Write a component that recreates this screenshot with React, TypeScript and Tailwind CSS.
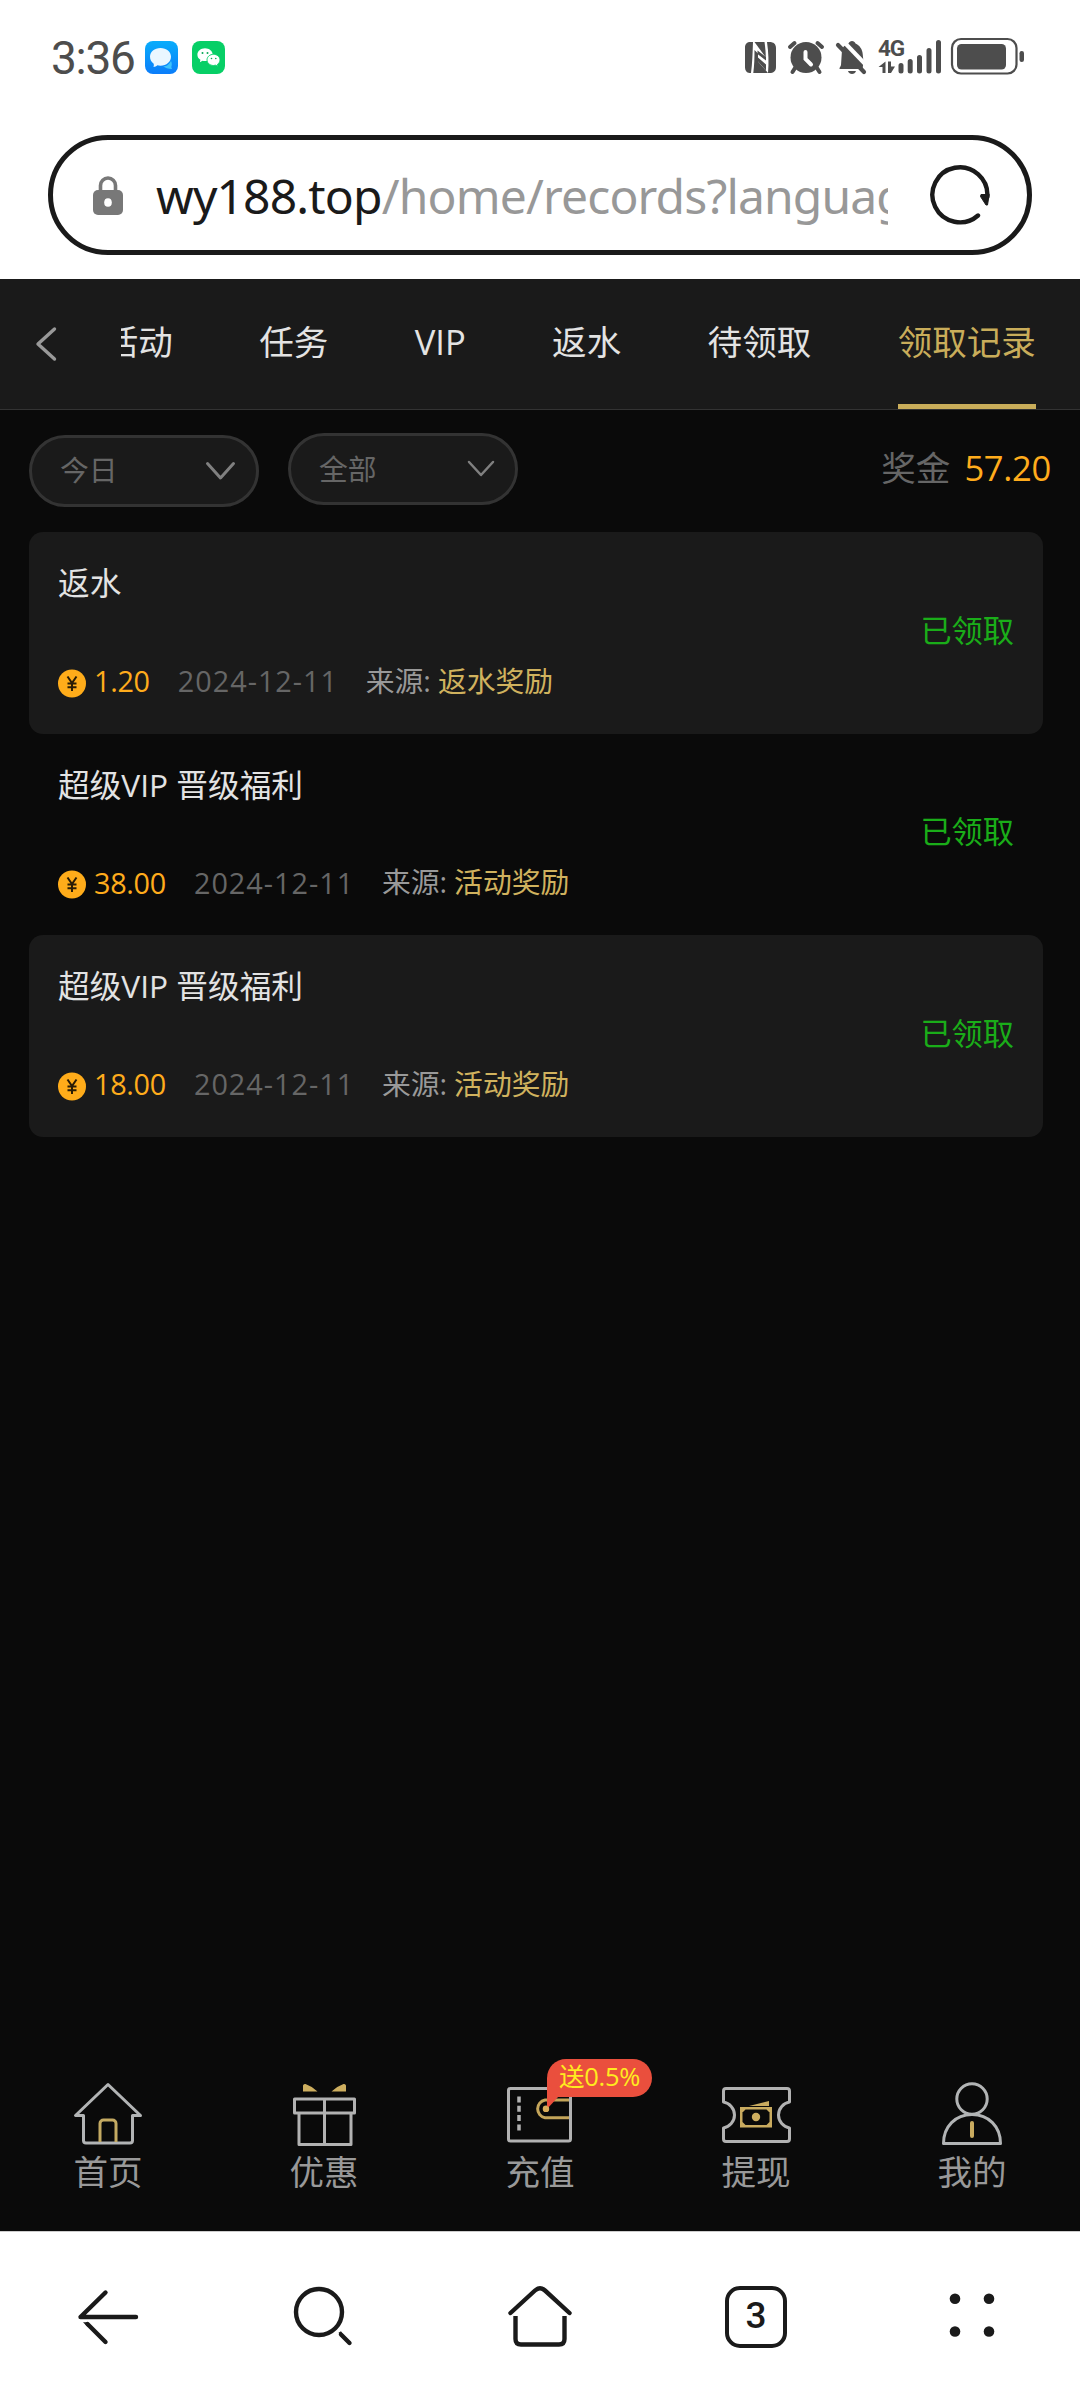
import React from "react";

const UI_FONT = "font-['Open_Sans','Noto_Sans_CJK_SC',sans-serif]";

function ChatAppIcon() {
  return (
    <svg viewBox="145 41 33 33" className="h-[33px] w-[33px]">
      <defs>
        <linearGradient id="chatBg" x1="0" y1="0" x2="0" y2="1">
          <stop offset="0" stopColor="#09adfb" />
          <stop offset="1" stopColor="#0b7dfa" />
        </linearGradient>
      </defs>
      <rect x="145" y="41" width="33" height="33" rx="8" fill="url(#chatBg)" />
      <path d="M163 66c4 1 6-2 8-5 1 2 1 4 .3 6l.7 2c-4 0-7-1-9-3z" fill="#3fc4fb" />
      <path d="M160.500 48c6 0 10.500 3.700 10.500 8.800s-4.500 8.900-10.500 8.900c-1.200 0-2.300 0-3.200-.4-1 1-2.300 1.500-3.800 1.600.4-1 .5-2.200.2-3.200-2.300-1.600-3.700-4-3.700-6.900 0-5.100 4.500-8.800 10.500-8.800z" fill="#eaf7ff" />
    </svg>
  );
}

function WeChatAppIcon() {
  return (
    <svg viewBox="192 41 33 33" className="h-[33px] w-[33px]">
      <rect x="192" y="41" width="33" height="33" rx="8" fill="#07cf66" />
      <path d="M205 48.300c4.300 0 7.700 2.900 7.700 6.400 0 3.600-3.400 6.400-7.700 6.400-.9 0-1.700-.1-2.500-.3l-2.600 1.500.5-2.500c-1.900-1.200-3-3-3-5.100 0-3.500 3.300-6.400 7.600-6.400z" fill="#fff" />
      <path d="M213.500 54.300c3.600 0 6.500 2.500 6.500 5.600 0 1.800-1 3.400-2.500 4.400l.4 2.100-2.200-1.200c-.7.200-1.400.3-2.200.3-3.600 0-6.500-2.500-6.500-5.600s2.900-5.600 6.500-5.600z" fill="#fff" stroke="#07cf66" strokeWidth=".9" />
      <g fill="#07a855">
        <circle cx="202.500" cy="53" r="1" />
        <circle cx="207.500" cy="53" r="1" />
        <circle cx="211.500" cy="58.500" r=".8" />
        <circle cx="215.800" cy="58.500" r=".8" />
      </g>
    </svg>
  );
}

function StatusIcons() {
  return (
    <div className="flex items-start text-[#4d4d4d]">
      <svg viewBox="744 37 34 38" className="h-[38px] w-[34px]" fill="currentColor">
        <path d="M752 42h-2.500c-3.500 0-5.500 2-5.500 5.500v20c0 3 1.500 5.300 4.500 5.500h1.500c1.300-9 1.600-20 2-31z" />
        <path d="M753.500 42h10c.8 5.500 1.200 10.500 1.300 15.500z" />
        <path d="M766 42h2.500c4 0 6.500 2 6.500 6v19c0 4-2.500 6-6.500 6h-1.500c1-10 .5-21-1-31z" />
        <path d="M752.300 73c1-7 1.200-15 1.200-23l3.500 3.500v8l10 11.500z" />
        <path d="M756.500 50.500l8.500 6.500v3.500l-8.500-6.500zM757 57.500l8 7v6l-8-9z" />
      </svg>
      <svg viewBox="785 37 40 38" className="ml-[7px] h-[38px] w-[40px]">
        <circle cx="805" cy="57.500" r="15.500" fill="currentColor" />
        <g stroke="currentColor" strokeWidth="4" strokeLinecap="round">
          <path d="M789 47l4.500-4M821 47l-4.500-4M794 68l-2.500 4M816 68l2.500 4" />
        </g>
        <path d="M804.500 52v7l5.500 5.500" fill="none" stroke="#fff" strokeWidth="4" strokeLinecap="round" />
      </svg>
      <svg viewBox="834 37 34 38" className="ml-[9px] h-[38px] w-[34px]">
        <path d="M838.500 69c0-2 1-1.800 1.500-4l1-15c1-4 4-5 6.500-6.500 1-3.500 6-3.500 7 0 4 1.500 7 6 7.200 10.500l.8 8-1 7z" fill="currentColor" />
        <path d="M847 71h8c-1 4-7 4-8 0z" fill="currentColor" />
        <path d="M842 41l24 25" stroke="#fff" strokeWidth="4" />
        <path d="M837 45l26 27" stroke="currentColor" strokeWidth="4.200" strokeLinecap="round" />
      </svg>
      <div className="ml-[9px] flex h-[38px] w-[62px]">
        <div className="flex w-[20px] flex-col">
          <span className="h-[20px] w-[26px] font-['Roboto',sans-serif] text-[22.500px] font-bold leading-[22px] tracking-[-1.200px]">4G</span>
          <svg viewBox="877 61 17 13" className="mt-[4px] h-[13px] w-[17px]" fill="currentColor">
            <path d="M884.500 61.500v11.500h-3v-6h-4zM887 61.500h3v5h4l-4 6.500h-3z" />
          </svg>
        </div>
        <svg viewBox="896 37 44 38" className="h-[38px] w-[44px] shrink-0" stroke="currentColor" strokeWidth="5" strokeLinecap="round">
          <path d="M899 65.500v5.500M908.200 61.500v9.500M917.500 57.500v13.500M927 50.500v20.500M936.500 42.500v28.500" />
        </svg>
      </div>
      <svg viewBox="950 37 76 38" className="ml-[10px] h-[38px] w-[76px]">
        <rect x="952" y="39" width="64.500" height="34.500" rx="9" fill="none" stroke="currentColor" strokeWidth="2.200" />
        <rect x="957" y="44" width="49" height="25.500" rx="4.500" fill="currentColor" />
        <rect x="1019.500" y="51" width="4.500" height="11" rx="2.200" fill="currentColor" />
      </svg>
    </div>
  );
}

function AddressBar() {
  return (
    <div className="mx-[48px] flex h-[120px] items-center rounded-full border-[5px] border-[#1a1a1a] bg-white">
      <svg viewBox="93 175 30 41" className="ml-[40px] h-[41px] w-[30px]">
        <path d="M100.500 192v-6.500a7.500 7.500 0 0 1 15 0v6.500" fill="none" stroke="#787878" strokeWidth="3.600" />
        <rect x="93" y="190" width="30" height="25" rx="5" fill="#787878" />
        <ellipse cx="108" cy="202.500" rx="3.800" ry="4.300" fill="#fff" />
      </svg>
      <div className="ml-[33px] h-[70px] w-[732px] overflow-hidden whitespace-nowrap font-['Noto_Sans',sans-serif] text-[48px] leading-[71px] text-[#989898]">
        <span className="tracking-[-0.850px] text-[#1a1a1a]">wy188.top</span>
        <span className="tracking-[-0.850px]">/home/records?language=</span>
      </div>
      <svg viewBox="929 165 62 62" className="ml-[41px] h-[62px] w-[62px]">
        <path d="M978 216.500A27.500 27.500 0 1 1 987.300 198" fill="none" stroke="#1a1a1a" strokeWidth="4.400" strokeLinecap="round" />
        <path d="M981 195.500h8.200l-1.700 10.500h-1.500l-5.500-8.500z" fill="#1a1a1a" stroke="#1a1a1a" strokeLinejoin="round" />
      </svg>
    </div>
  );
}

const tabs = ["活动", "任务", "VIP", "返水", "待领取"];

function TabHeader() {
  return (
    <div className="flex h-[131px] border-b border-[#333] bg-[#1a1a1a]">
      <svg viewBox="34 324 26 40" className="ml-[34px] mt-[45px] h-[40px] w-[26px]">
        <path d="M54.500 329l-16.500 15 16.500 15" fill="none" stroke="#999" strokeWidth="3.400" strokeLinecap="round" strokeLinejoin="round" />
      </svg>
      <div className="ml-[61px] flex flex-1 justify-end gap-[86.400px] overflow-hidden whitespace-nowrap pr-[44.200px] text-[34.560px] leading-[126px] text-[#e3e3e3]">
        {tabs.map((t) => (
          <span key={t}>{t}</span>
        ))}
        <span className="border-b-[5px] border-[#c9ad5a] text-[#c9ad5a]">领取记录</span>
      </div>
    </div>
  );
}

function Filters() {
  return (
    <div className="flex h-[122px] items-start pl-[29px] pr-[29px] pt-[23px]">
      <div className="mt-[2px] flex h-[72px] w-[230px] items-center justify-between rounded-full border-[3px] border-[#333] bg-[#1a1a1a] pl-[28px] pr-[18px] text-[28.800px] leading-[66px] text-[#666]">
        <span className="-mt-[2px]">今日</span>
        <svg viewBox="204 460 34 22" className="h-[22px] w-[34px]">
          <path d="M207.500 463.500l13 14.500 13-14.500" fill="none" stroke="#808080" strokeWidth="3" strokeLinecap="round" strokeLinejoin="round" />
        </svg>
      </div>
      <div className="ml-[29px] flex h-[72px] w-[230px] items-center justify-between rounded-full border-[3px] border-[#333] bg-[#1a1a1a] pl-[28px] pr-[19px] text-[28.800px] leading-[66px] text-[#666]">
        <span>全部</span>
        <svg viewBox="466 458 30 22" className="h-[22px] w-[30px]">
          <path d="M469 462l12 13 12-13" fill="none" stroke="#808080" strokeWidth="2.500" strokeLinecap="round" strokeLinejoin="round" />
        </svg>
      </div>
      <div className="ml-auto flex text-[34.560px] leading-[70px] text-[#666]">
        <span>奖金</span>
        <span className="ml-[14px] tracking-[-0.300px] text-[#ffac1c]">57.20</span>
      </div>
    </div>
  );
}

function Coin() {
  return (
    <svg viewBox="0 0 28 28" className="mt-[4px] h-[29px] w-[28px]">
      <circle cx="14" cy="14" r="14" fill="#ffac1a" />
      <path d="M9.500 7l4.500 6.500L18.500 7M14 13.500v8M9.500 14h9M9.500 17.800h9" fill="none" stroke="#2a1c05" strokeWidth="2" />
    </svg>
  );
}

const records = [
  { title: "返水", amount: "1.20", source: "返水奖励" },
  { title: "超级VIP 晋级福利", amount: "38.00", source: "活动奖励" },
  { title: "超级VIP 晋级福利", amount: "18.00", source: "活动奖励" },
];

function RecordList() {
  return (
    <div className="ml-[29px] flex w-[1014px] flex-col">
      {records.map((r, i) => (
        <div key={i} className="flex h-[201.600px] items-center justify-between rounded-[14px] pl-[29px] pr-[29px] odd:bg-[#1a1a1a]">
          <div className="flex h-full flex-col pt-[28px]">
            <span className="h-[46px] text-[31.680px] leading-[46px] text-[#e3e3e3]">{r.title}</span>
            <div className="mt-[53px] flex h-[44px] items-center text-[28.800px] leading-[44px]">
              <Coin />
              <span className="ml-[8px] tracking-[-0.300px] text-[#ffac1c]">{r.amount}</span>
              <span className="ml-[28px] w-[160px] whitespace-nowrap tracking-[1px] text-[#666]">2024-12-11</span>
              <span className="-mt-[1px] ml-[28px] text-[#999]">来源:</span>
              <span className="-mt-[1px] ml-[7px] text-[#d0b25e]">{r.source}</span>
            </div>
          </div>
          <span className="pb-[5px] text-[31.200px] text-[#1aad19]">已领取</span>
        </div>
      ))}
    </div>
  );
}

const ICON = "h-[68px] w-[76px]";

function NavItem({ label, children }: { label: string; children: React.ReactNode }) {
  return (
    <div className="relative flex w-[216px] flex-col items-center text-[34.560px] leading-[48px] text-[#999]">
      {children}
      <span>{label}</span>
    </div>
  );
}

function SiteNav() {
  return (
    <div className="mt-auto flex h-[151px]">
      <NavItem label="首页">
        <svg viewBox="70 2080 76 68" className={ICON} fill="none" strokeWidth="3" strokeLinejoin="round">
          <path d="M108 2084.500L75.500 2115.500h8v25a2.500 2.500 0 0 0 2.500 2.500h44a2.500 2.500 0 0 0 2.500-2.500v-25h8z" stroke="#b2b4b5" />
          <path d="M100 2142v-18.500a3.500 3.500 0 0 1 3.500-3.500h9a3.500 3.500 0 0 1 3.500 3.500V2142" stroke="#c4aa62" />
        </svg>
      </NavItem>
      <NavItem label="优惠">
        <svg viewBox="286 2080 76 68" className={ICON} fill="none" strokeWidth="3" strokeLinejoin="round">
          <path d="M294.500 2099h60v14h-60zM299 2113.500v31h52v-31M324.500 2099v45" stroke="#b2b2b2" />
          <path d="M303 2091.500v-6q.500-2 2.500-1.500 6 2 12 7.500zM346 2091.500v-6q-.500-2-2.500-1.500-6 2-12 7.500z" fill="#cdae5f" />
        </svg>
      </NavItem>
      <NavItem label="充值">
        <svg viewBox="502 2080 76 68" className={ICON} fill="none" strokeWidth="3">
          <rect x="508.500" y="2088.500" width="62" height="52.500" rx="2" stroke="#b2b2b2" />
          <path d="M519 2096.500v34" stroke="#b2b2b2" strokeWidth="3.500" strokeDasharray="6 3.300" />
          <path d="M569 2100h-24a9 9 0 0 0 0 17.700h24" stroke="#c4a55a" />
          <circle cx="546" cy="2108.800" r="3.200" fill="#cdae5f" />
        </svg>
        <div className="absolute left-[115px] top-[-21px] h-[38px] w-[105px] rounded-[19px] rounded-bl-none bg-[#ea4f3d] pl-[12px] text-[25.500px] leading-[34px] tracking-[-0.300px] whitespace-nowrap text-[#ffeb1f]">
          <svg viewBox="0 0 12 14" className="absolute left-0 top-[37px] h-[14px] w-[12px]">
            <path d="M0 0h12L0 13z" fill="#ea4f3d" />
          </svg>
          <span>送0.5%</span>
        </div>
        <svg viewBox="0 0 8 8" className="absolute left-[110px] top-[25px] h-[8px] w-[8px]">
          <circle cx="4" cy="4" r="3.100" fill="#d9ad5a" />
        </svg>
      </NavItem>
      <NavItem label="提现">
        <svg viewBox="718 2080 76 68" className={ICON} fill="none" strokeWidth="3" strokeLinejoin="round">
          <path d="M723.500 2102v-11q0-2.500 2.500-2.500h61q2.500 0 2.500 2.500v11c-6 1-11 6.500-11 13s5 12 11 13v11q0 2.500-2.500 2.500h-61q-2.500 0-2.500-2.500v-11c6-1 11-6.500 11-13s-5-12-11-13z" stroke="#b2b2b2" />
          <rect x="740" y="2107" width="32" height="20.500" fill="#c9ab5f" />
          <path d="M745.500 2109.500h21l3 3v9.500l-3 3h-21l-3-3v-9.500z" fill="#0a0a0a" />
          <circle cx="756" cy="2117" r="4.200" fill="#cdae5f" />
          <path d="M749 2106l20-5v5z" fill="#c9ab5f" />
        </svg>
      </NavItem>
      <NavItem label="我的">
        <svg viewBox="934 2080 76 68" className={ICON} fill="none" strokeWidth="3" strokeLinejoin="round">
          <circle cx="972" cy="2099" r="15.200" stroke="#b2b4b5" />
          <path d="M943.500 2143.500c0-17 12-29 28.500-29s28.500 12 28.500 29z" stroke="#b2b4b5" />
          <path d="M972 2123v13" stroke="#c9ab5f" strokeWidth="4" strokeLinecap="round" />
        </svg>
      </NavItem>
    </div>
  );
}

function BrowserBar() {
  const cls = "h-[72px] w-[72px]";
  return (
    <div className="grid h-[169px] grid-cols-5 justify-items-center border-t border-[#ccc] bg-white pt-[49px]">
      <svg viewBox="72 2281 72 72" className={cls} fill="none" stroke="#1a1a1a" strokeWidth="4.400" strokeLinecap="round" strokeLinejoin="round">
        <path d="M136 2317H80.500L105.500 2292.500M105.500 2342l-18-18" />
        <path d="M83 2322.300h5l2 3-2.500 1.500z" fill="#1a1a1a" stroke="none" />
      </svg>
      <svg viewBox="288 2281 72 72" className={cls} fill="none" stroke="#1a1a1a" strokeWidth="4.400" strokeLinecap="round">
        <circle cx="319" cy="2312" r="23" />
        <path d="M341 2334.500l8.500 8.500" />
        <path d="M339 2333.500l2.500-1.500" strokeWidth="2" strokeLinecap="butt" />
      </svg>
      <svg viewBox="504 2281 72 72" className={cls} fill="none" stroke="#1a1a1a" strokeWidth="4.400" strokeLinecap="round">
        <path d="M510.500 2313l24.500-22.500q5-4.500 10 0l24.500 22.500" />
        <path d="M515.500 2316v23q0 5.500 5.500 5.500h38q5.500 0 5.500-5.500v-23" strokeLinecap="butt" />
      </svg>
      <div className="mt-[5px] flex h-[62px] w-[62px] items-center justify-center rounded-[15px] border-[4.500px] border-[#1a1a1a] pb-[4px] font-['Roboto',sans-serif] text-[37px] font-medium leading-none text-[#1a1a1a]">3</div>
      <svg viewBox="936 2281 72 72" className={cls} fill="#1a1a1a">
        <circle cx="955" cy="2298.700" r="5.300" />
        <circle cx="989" cy="2298.700" r="5.300" />
        <circle cx="955" cy="2331.500" r="5.300" />
        <circle cx="989" cy="2331.500" r="5.300" />
      </svg>
    </div>
  );
}

export default function App() {
  return (
    <div className={`flex h-[2400px] w-[1080px] flex-col overflow-hidden bg-[#0a0a0a] ${UI_FONT}`}>
      <header className="h-[279px] shrink-0 bg-white">
        <div className="flex h-[135px] items-start justify-between pl-[51px] pr-[54px] pt-[37px]">
          <div className="flex items-start">
            <span className="w-[94px] whitespace-nowrap font-['Roboto',sans-serif] text-[46px] leading-[43px] tracking-[-1.300px] text-[#4d4d4d]">3:36</span>
            <div className="mt-[4px] flex gap-[14px]">
              <ChatAppIcon />
              <WeChatAppIcon />
            </div>
          </div>
          <StatusIcons />
        </div>
        <AddressBar />
      </header>
      <main className="flex flex-1 flex-col">
        <TabHeader />
        <Filters />
        <RecordList />
        <SiteNav />
      </main>
      <BrowserBar />
    </div>
  );
}
